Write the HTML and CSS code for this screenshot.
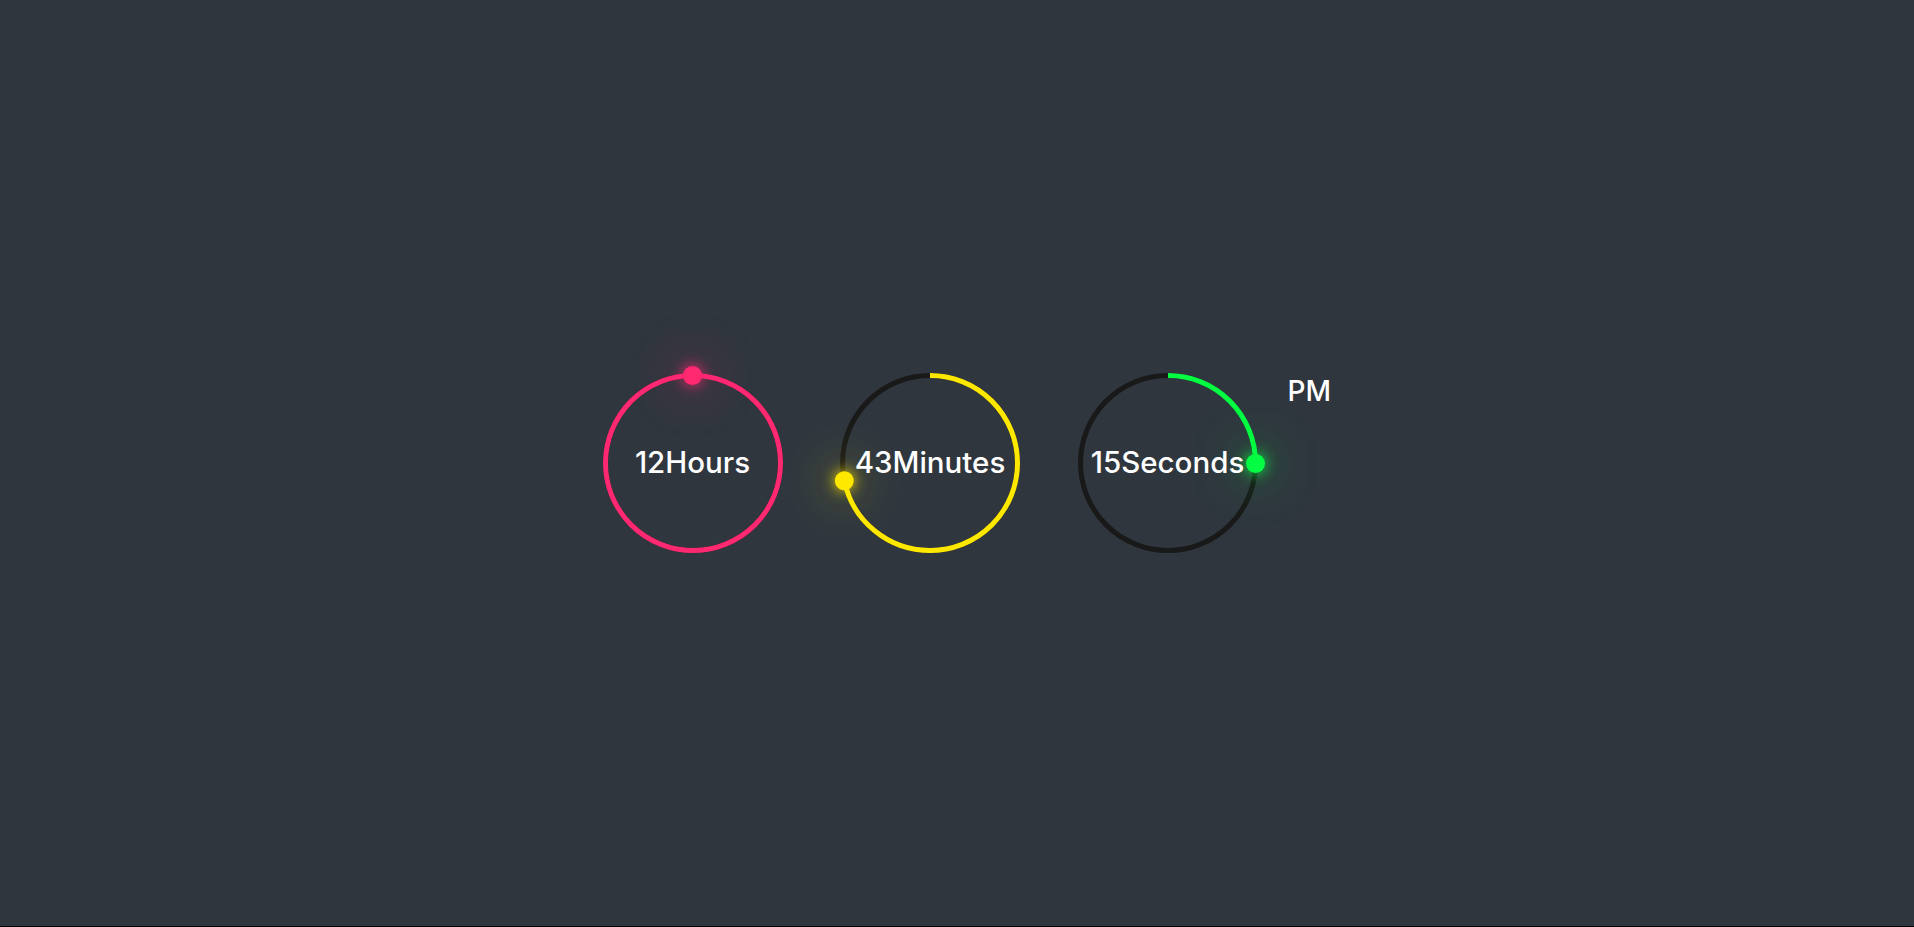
FILE: index.html
```
<!DOCTYPE html>
<html lang="en">
<head>
    <meta charset="UTF-8">
    <meta name="viewport" content="width=device-width, initial-scale=1.0">
    <title>Neon Clock</title>
    <link rel="stylesheet" href="styles.css">
</head>
<body>
    <div id="time">
        <div class="ring" style="--clr: #ff2972; --angle: 0deg;">
            <svg viewBox="0 0 180 180">
                <circle class="track" cx="90" cy="90" r="87.5"></circle>
                <circle class="bar" cx="90" cy="90" r="87.5" style="stroke-dasharray: 550 600;"></circle>
            </svg>
            <div class="dots"></div>
            <div class="label">12Hours</div>
        </div>
        <div class="ring" style="--clr: #fee800; --angle: 258deg;">
            <svg viewBox="0 0 180 180">
                <circle class="track" cx="90" cy="90" r="87.5"></circle>
                <circle class="bar" cx="90" cy="90" r="87.5" style="stroke-dasharray: 394 600;"></circle>
            </svg>
            <div class="dots"></div>
            <div class="label">43Minutes</div>
        </div>
        <div class="ring" style="--clr: #04fc43; --angle: 90deg;">
            <svg viewBox="0 0 180 180">
                <circle class="track" cx="90" cy="90" r="87.5"></circle>
                <circle class="bar" cx="90" cy="90" r="87.5" style="stroke-dasharray: 137.4 600;"></circle>
            </svg>
            <div class="dots"></div>
            <div class="label">15Seconds</div>
        </div>
        <div class="ampm">PM</div>
    </div>
</body>
</html>
```

FILE: styles.css
```
html {
    background: #000;
}

body {
    margin: 0;
    height: calc(100vh - 1px);
    background: #2f363e;
    display: flex;
    justify-content: center;
    align-items: center;
    font-family: Inter, sans-serif;
    color: #fff;
}

#time {
    display: flex;
    align-items: center;
    gap: 57.5px;
    padding-left: 32px;
}

.ring {
    position: relative;
    width: 180px;
    height: 180px;
    display: flex;
    justify-content: center;
    align-items: center;
}

.ring svg {
    position: absolute;
    inset: 0;
    width: 180px;
    height: 180px;
    overflow: visible;
    transform: rotate(-90deg);
}

.ring circle {
    fill: transparent;
    stroke-width: 5;
}

.ring .track {
    stroke: #191919;
}

.ring .bar {
    stroke: var(--clr);
}

.dots {
    position: absolute;
    inset: 0;
    transform: rotate(var(--angle));
}

.dots::before {
    content: '';
    position: absolute;
    top: -7px;
    left: 50%;
    width: 19px;
    height: 19px;
    margin-left: -9.5px;
    border-radius: 50%;
    background: var(--clr);
    box-shadow: 0 0 14px var(--clr), 0 0 50px var(--clr);
}

.label {
    position: relative;
    font-size: 29.5px;
    font-weight: 500;
    line-height: 1;
}

.ampm {
    align-self: flex-start;
    width: 56px;
    margin-left: -27.5px;
    margin-top: 1px;
    font-size: 28px;
    font-weight: 500;
}
```
